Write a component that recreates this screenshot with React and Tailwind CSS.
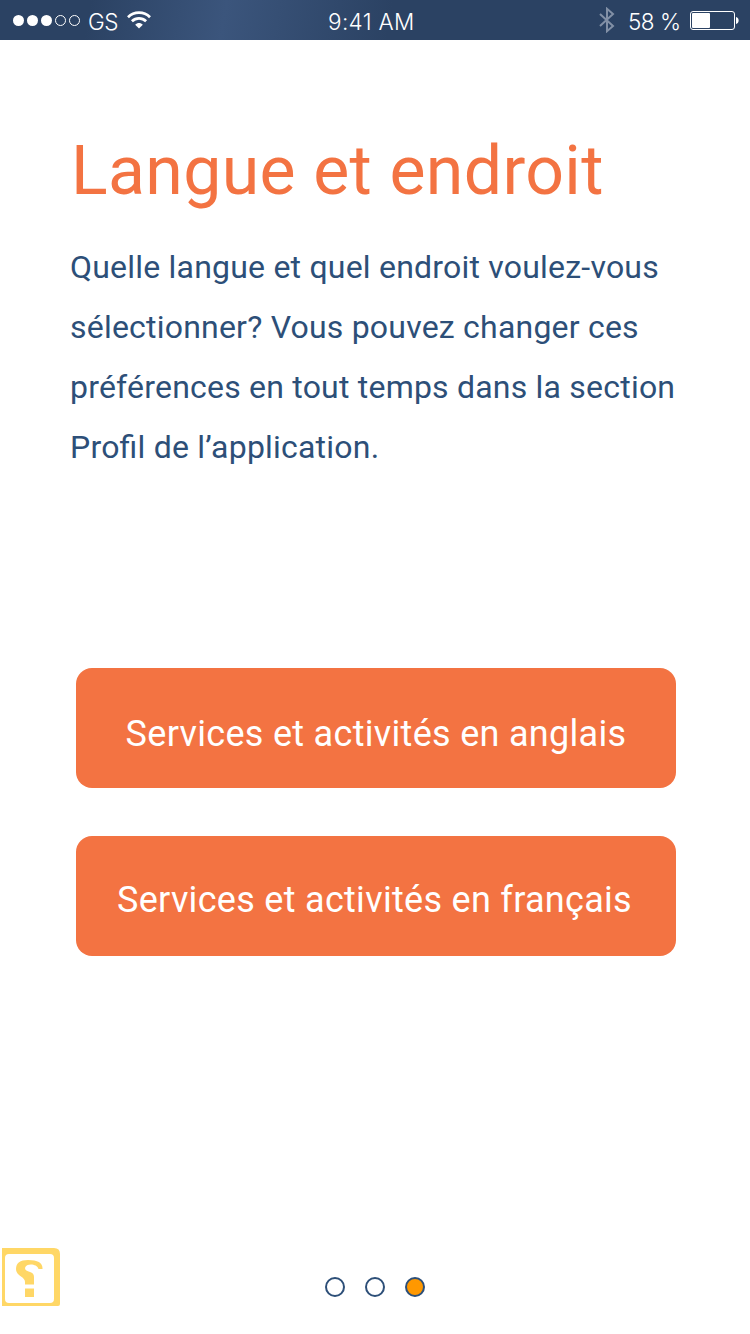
const screens = ["language", "notifications", "location"];

function SignalDots() {
  return (
    <svg width="70" height="14" viewBox="12 13 70 14" className="shrink-0">
      <circle cx="18.500" cy="20.500" r="5.500" fill="white" />
      <circle cx="32.500" cy="20.500" r="5.500" fill="white" />
      <circle cx="46.500" cy="20.500" r="5.500" fill="white" />
      <circle cx="60.500" cy="20.500" r="5" fill="none" stroke="white" />
      <circle cx="74.500" cy="20.500" r="5" fill="none" stroke="white" />
    </svg>
  );
}

function Wifi() {
  return (
    <svg width="24" height="18" viewBox="0 0 24 18" className="ml-2 shrink-0" fill="none" stroke="white" strokeWidth="2.700">
      <path d="M1 6.200C7 .2 17 .2 23 6.200" />
      <path d="M4.900 10.200C9 6.300 15 6.300 19.100 10.200" />
      <path d="M8.200 13.700C10.400 11.500 13.600 11.500 15.800 13.700L12 17.500Z" fill="white" stroke="none" />
    </svg>
  );
}

function Bluetooth() {
  return (
    <svg width="16" height="26" viewBox="0 0 16 26" className="shrink-0" fill="none" stroke="#8290a6" strokeWidth="2">
      <path d="M1 7L14 19L8 24.200V1.800L14 7L1 19" />
    </svg>
  );
}

function Battery() {
  return (
    <svg width="50" height="19" viewBox="0 0 50 19" className="ml-2.5 mt-px shrink-0">
      <rect x="0.500" y="0.500" width="44" height="18" rx="2.500" fill="none" stroke="white" />
      <rect x="2" y="2" width="18" height="15" rx="1" fill="white" />
      <path d="M46 6C49.500 6.500 49.500 12.500 46 13Z" fill="white" />
    </svg>
  );
}

export default function App() {
  return (
    <main className="flex h-[1334px] w-[750px] flex-col overflow-hidden bg-white font-['Roboto',sans-serif] text-[#2d4f78]">
      <header className="flex h-10 shrink-0 items-center bg-[linear-gradient(100deg,#2b4263_12%,#3b557c_30%,#2b4263_52%)] pl-3 font-['Inter',sans-serif] text-[22.500px] font-[350] leading-10 text-white">
        <div className="flex w-[316px] items-center">
          <SignalDots />
          <span className="ml-1.5 w-[31px] pt-[3px] tracking-[-0.5px]">GS</span>
          <Wifi />
        </div>
        <span className="w-[271px] pt-[3px] tracking-[0.350px]">9:41 AM</span>
        <Bluetooth />
        <span className="ml-[13px] w-[52px] whitespace-nowrap pt-[3px] tracking-[-0.5px]">58 %</span>
        <Battery />
      </header>
      <section className="flex grow flex-col pl-[70px]">
        <h1 className="ml-px mt-[91px] h-20 whitespace-nowrap text-[68px] leading-[80px] tracking-[0.35px] text-[#f37342]">Langue et endroit</h1>
        <p className="mt-[26px] w-[620px] text-[32px] leading-[60px] tracking-[0.21px] [font-feature-settings:'liga']">
          Quelle langue et quel endroit voulez-vous sélectionner? Vous pouvez changer ces préférences en tout temps dans la section Profil de l’application.
        </p>
        <button className="ml-1.5 mt-[191px] h-[120px] w-[600px] rounded-2xl bg-[#f37342] pt-3 text-[36px] tracking-[0.300px] text-white">Services et activités en anglais</button>
        <button className="ml-1.5 mt-12 h-[120px] w-[600px] rounded-2xl bg-[#f37342] pr-[3px] pt-2 text-[36px] tracking-[0.300px] text-white">Services et activités en français</button>
      </section>
      <footer className="flex h-[90px] shrink-0 items-start pl-0.5 pt-1">
        <svg width="58" height="58" viewBox="0 0 58 58" className="shrink-0" fill="#ffd766">
          <path fillRule="evenodd" d="M0 0H52Q58 0 58 6V56Q58 58 56 58H0ZM7 6Q3 6 3 10V51Q3 55 7 55H48Q52 55 52 51V10Q52 6 48 6Z" />
          <path d="M40.500 21H36.500C35 15.500 24 15 23 20C23 22.500 25 23 28 24Q32 25 32 29V36.500H23V34Q23 31 19 28.500Q14 25.500 14 21Q14 12 26 12Q41 12 40.500 21Z" />
          <path d="M23 40.500H32V49H23Z" />
        </svg>
        <div className="ml-[265px] mt-[25px] flex gap-5 pt-1">
          {screens.map((screen, index) => (
            <span key={screen} className={index === 2 ? "size-5 rounded-full border-2 border-[#2d4f78] bg-[#ff9800]" : "size-5 rounded-full border-2 border-[#2d4f78]"} />
          ))}
        </div>
      </footer>
    </main>
  );
}
